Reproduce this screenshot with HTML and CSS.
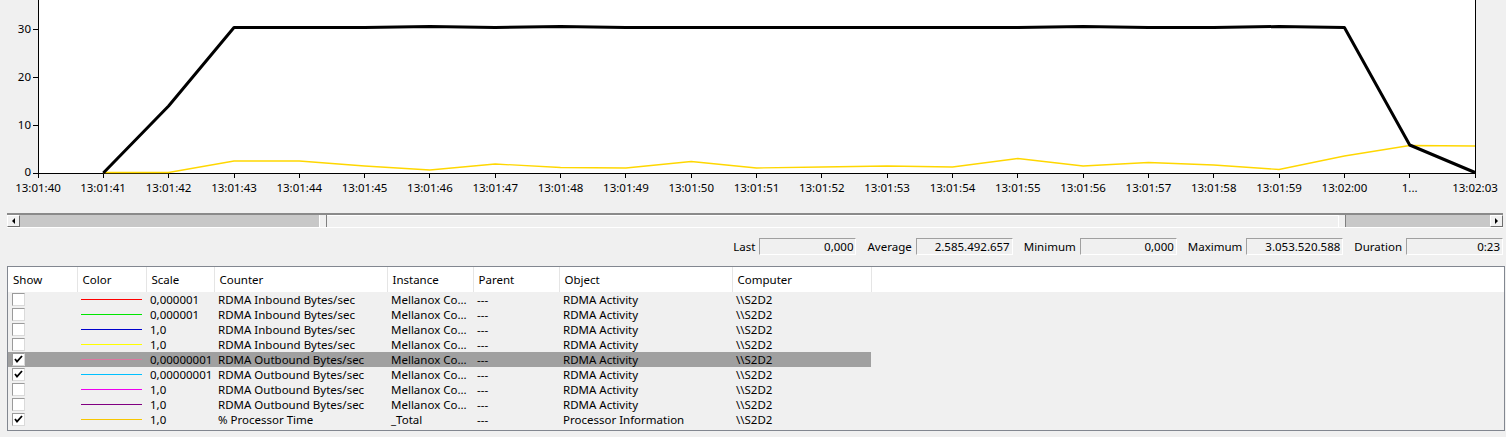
FILE: index.html
```html
<!DOCTYPE html>
<html lang="en">
<head>
    <meta charset="UTF-8">
    <meta name="viewport" content="width=device-width, initial-scale=1.0">
    <title>Performance Monitor - RDMA Activity</title>
    <link rel="stylesheet" href="styles.css">
</head>
<body>
    <!-- Line Graph -->
    <div class="graph">
        <svg width="1506" height="200" viewBox="0 0 1506 200">
            <rect x="38" y="0" width="1437" height="173" fill="#ffffff"/>

            <!-- Axes -->
            <path class="axis" d="M38.5 0 V173.5 H1475.5 V0"/>
            <path class="axis" d="M33 29.5 H38 M33 77.5 H38 M33 125.5 H38 M33 173.5 H38"/>
            <path class="axis" d="M38.5 173 v5 M103.5 173 v5 M168.5 173 v5 M234.5 173 v5 M299.5 173 v5 M364.5 173 v5 M429.5 173 v5 M495.5 173 v5 M560.5 173 v5 M625.5 173 v5 M691.5 173 v5 M756.5 173 v5 M821.5 173 v5 M887.5 173 v5 M952.5 173 v5 M1017.5 173 v5 M1083.5 173 v5 M1148.5 173 v5 M1213.5 173 v5 M1279.5 173 v5 M1344.5 173 v5 M1409.5 173 v5 M1475.5 173 v5"/>

            <!-- Y labels -->
            <text class="label" x="31" y="32.5" text-anchor="end">30</text>
            <text class="label" x="31" y="80.5" text-anchor="end">20</text>
            <text class="label" x="31" y="128.5" text-anchor="end">10</text>
            <text class="label" x="31" y="176" text-anchor="end">0</text>

            <!-- X labels -->
            <g class="label" text-anchor="middle">
                <text x="38" y="192">13:01:40</text>
                <text x="103" y="192">13:01:41</text>
                <text x="168.6" y="192">13:01:42</text>
                <text x="234" y="192">13:01:43</text>
                <text x="299.3" y="192">13:01:44</text>
                <text x="364.6" y="192">13:01:45</text>
                <text x="429.9" y="192">13:01:46</text>
                <text x="495.2" y="192">13:01:47</text>
                <text x="560.5" y="192">13:01:48</text>
                <text x="625.9" y="192">13:01:49</text>
                <text x="691.2" y="192">13:01:50</text>
                <text x="756.5" y="192">13:01:51</text>
                <text x="821.8" y="192">13:01:52</text>
                <text x="887.1" y="192">13:01:53</text>
                <text x="952.5" y="192">13:01:54</text>
                <text x="1017.8" y="192">13:01:55</text>
                <text x="1083.1" y="192">13:01:56</text>
                <text x="1148.4" y="192">13:01:57</text>
                <text x="1213.7" y="192">13:01:58</text>
                <text x="1279" y="192">13:01:59</text>
                <text x="1344.4" y="192">13:02:00</text>
                <text x="1409.7" y="192">1...</text>
                <text x="1475" y="192">13:02:03</text>
            </g>

            <!-- % Processor Time -->
            <polyline class="series-yellow" points="103.3,172.5 168.6,172.5 234,161 299.3,161 364.6,166 429.9,170 495.2,164 560.5,167.5 625.9,168 691.2,161.5 756.5,168 821.8,167 887.1,166 952.5,167 1017.8,158.5 1083.1,166 1148.4,162.5 1213.7,165 1279,169.5 1344.4,156 1409.7,145.5 1475,146"/>

            <!-- Selected counter (highlighted) -->
            <polyline class="series-black" points="103.3,173 168.6,106 234,27.5 299.3,27.5 364.6,27.5 429.9,26.5 495.2,27.5 560.5,26.5 625.9,27.5 691.2,27.5 756.5,27.5 821.8,27.5 887.1,27.5 952.5,27.5 1017.8,27.5 1083.1,26.5 1148.4,27.5 1213.7,27.5 1279,26.5 1344.4,27.5 1409.7,145 1475,172.5"/>
        </svg>
    </div>

    <!-- Time range slider -->
    <div class="scrollbar">
        <div class="sb-btn"><span class="arrow-left"></span></div>
        <div class="sb-track sb-track-left"></div>
        <div class="sb-grip"></div>
        <div class="sb-thumb"></div>
        <div class="sb-grip"></div>
        <div class="sb-track sb-track-right"></div>
        <div class="sb-btn"><span class="arrow-right"></span></div>
    </div>

    <!-- Statistics -->
    <div class="stats">
        <span class="stat-label">Last</span>
        <span class="stat-box">0,000</span>
        <span class="stat-label">Average</span>
        <span class="stat-box">2.585.492.657</span>
        <span class="stat-label">Minimum</span>
        <span class="stat-box">0,000</span>
        <span class="stat-label">Maximum</span>
        <span class="stat-box">3.053.520.588</span>
        <span class="stat-label">Duration</span>
        <span class="stat-box">0:23</span>
    </div>

    <!-- Counter legend -->
    <div class="counters">
        <table>
            <colgroup>
                <col class="c-show">
                <col class="c-color">
                <col class="c-scale">
                <col class="c-counter">
                <col class="c-instance">
                <col class="c-parent">
                <col class="c-object">
                <col class="c-computer">
                <col>
            </colgroup>
            <thead>
                <tr>
                    <th>Show</th>
                    <th>Color</th>
                    <th>Scale</th>
                    <th>Counter</th>
                    <th>Instance</th>
                    <th>Parent</th>
                    <th>Object</th>
                    <th>Computer</th>
                    <th class="fill"></th>
                </tr>
            </thead>
            <tbody>
                <tr>
                    <td class="show"><span class="check"></span></td>
                    <td class="color"><span class="swatch" style="background:#ff0000"></span></td>
                    <td>0,000001</td>
                    <td>RDMA Inbound Bytes/sec</td>
                    <td>Mellanox Co...</td>
                    <td>---</td>
                    <td>RDMA Activity</td>
                    <td>\\S2D2</td>
                    <td class="fill"></td>
                </tr>
                <tr>
                    <td class="show"><span class="check"></span></td>
                    <td class="color"><span class="swatch" style="background:#00e600"></span></td>
                    <td>0,000001</td>
                    <td>RDMA Inbound Bytes/sec</td>
                    <td>Mellanox Co...</td>
                    <td>---</td>
                    <td>RDMA Activity</td>
                    <td>\\S2D2</td>
                    <td class="fill"></td>
                </tr>
                <tr>
                    <td class="show"><span class="check"></span></td>
                    <td class="color"><span class="swatch" style="background:#0000cc"></span></td>
                    <td>1,0</td>
                    <td>RDMA Inbound Bytes/sec</td>
                    <td>Mellanox Co...</td>
                    <td>---</td>
                    <td>RDMA Activity</td>
                    <td>\\S2D2</td>
                    <td class="fill"></td>
                </tr>
                <tr>
                    <td class="show"><span class="check"></span></td>
                    <td class="color"><span class="swatch" style="background:#ffff00"></span></td>
                    <td>1,0</td>
                    <td>RDMA Inbound Bytes/sec</td>
                    <td>Mellanox Co...</td>
                    <td>---</td>
                    <td>RDMA Activity</td>
                    <td>\\S2D2</td>
                    <td class="fill"></td>
                </tr>
                <tr class="selected">
                    <td class="show"><span class="check"><svg width="11" height="11" viewBox="0 0 11 11"><path d="M2 5 L4 7.5 L9 2"/></svg></span></td>
                    <td class="color"><span class="swatch" style="background:#dc78a0"></span></td>
                    <td>0,00000001</td>
                    <td>RDMA Outbound Bytes/sec</td>
                    <td>Mellanox Co...</td>
                    <td>---</td>
                    <td>RDMA Activity</td>
                    <td>\\S2D2</td>
                    <td class="fill"></td>
                </tr>
                <tr>
                    <td class="show"><span class="check"><svg width="11" height="11" viewBox="0 0 11 11"><path d="M2 5 L4 7.5 L9 2"/></svg></span></td>
                    <td class="color"><span class="swatch" style="background:#00c0ff"></span></td>
                    <td>0,00000001</td>
                    <td>RDMA Outbound Bytes/sec</td>
                    <td>Mellanox Co...</td>
                    <td>---</td>
                    <td>RDMA Activity</td>
                    <td>\\S2D2</td>
                    <td class="fill"></td>
                </tr>
                <tr>
                    <td class="show"><span class="check"></span></td>
                    <td class="color"><span class="swatch" style="background:#ee00ee"></span></td>
                    <td>1,0</td>
                    <td>RDMA Outbound Bytes/sec</td>
                    <td>Mellanox Co...</td>
                    <td>---</td>
                    <td>RDMA Activity</td>
                    <td>\\S2D2</td>
                    <td class="fill"></td>
                </tr>
                <tr>
                    <td class="show"><span class="check"></span></td>
                    <td class="color"><span class="swatch" style="background:#800080"></span></td>
                    <td>1,0</td>
                    <td>RDMA Outbound Bytes/sec</td>
                    <td>Mellanox Co...</td>
                    <td>---</td>
                    <td>RDMA Activity</td>
                    <td>\\S2D2</td>
                    <td class="fill"></td>
                </tr>
                <tr>
                    <td class="show"><span class="check"><svg width="11" height="11" viewBox="0 0 11 11"><path d="M2 5 L4 7.5 L9 2"/></svg></span></td>
                    <td class="color"><span class="swatch" style="background:#f7c600"></span></td>
                    <td>1,0</td>
                    <td>% Processor Time</td>
                    <td>_Total</td>
                    <td>---</td>
                    <td>Processor Information</td>
                    <td>\\S2D2</td>
                    <td class="fill"></td>
                </tr>
            </tbody>
        </table>
    </div>
</body>
</html>
```

FILE: styles.css
```css
/* General */
body {
    margin: 0;
    background-color: #f0f0f0;
    font-family: "Noto Sans", "Open Sans", sans-serif;
    font-size: 11.5px;
    color: #000000;
}

/* Graph */
.graph svg {
    display: block;
}

.axis {
    fill: none;
    stroke: #000000;
    stroke-width: 1;
    shape-rendering: crispEdges;
}

.label {
    font-family: "Noto Sans", "Open Sans", sans-serif;
    font-size: 11.5px;
    fill: #000000;
}

.series-black {
    fill: none;
    stroke: #000000;
    stroke-width: 3;
    stroke-linejoin: round;
}

.series-yellow {
    fill: none;
    stroke: #ffd700;
    stroke-width: 1.3;
}

/* Time range slider */
.scrollbar {
    display: flex;
    height: 12px;
    margin: 13px 3px 0 7px;
    border-top: 2px solid #8a8a8a;
    border-bottom: 1px solid #ffffff;
}

.sb-btn {
    width: 13px;
    box-sizing: border-box;
    background: #f0f0f0;
    border: 1px solid;
    border-color: #ffffff #6e6e6e #6e6e6e #ffffff;
    display: flex;
    align-items: center;
    justify-content: center;
}

.arrow-left {
    width: 0;
    height: 0;
    border-top: 3px solid transparent;
    border-bottom: 3px solid transparent;
    border-right: 3px solid #000000;
}

.arrow-right {
    width: 0;
    height: 0;
    border-top: 3px solid transparent;
    border-bottom: 3px solid transparent;
    border-left: 3px solid #000000;
}

.sb-track {
    background: #c8c8c8;
}

.sb-track-left {
    width: 299px;
}

.sb-track-right {
    width: 144px;
}

.sb-grip {
    width: 8px;
    box-sizing: border-box;
    background: #f0f0f0;
    border-left: 1px solid #ffffff;
    border-right: 1px solid #808080;
}

.sb-thumb {
    flex: 1;
    background: #f0f0f0;
    border-top: 1px solid #ffffff;
}

/* Statistics */
.stats {
    display: flex;
    justify-content: flex-end;
    align-items: center;
    height: 17px;
    margin: 10px 3px 0 0;
}

.stat-label {
    margin-left: 11px;
}

.stat-box {
    width: 97px;
    height: 17px;
    box-sizing: border-box;
    margin-left: 4px;
    padding-right: 2px;
    border: 1px solid;
    border-color: #a0a0a0 #ffffff #ffffff #a0a0a0;
    text-align: right;
    line-height: 15px;
}

/* Counter legend */
.counters {
    height: 163px;
    margin: 11px 1px 0 7px;
    border: 1px solid #828790;
    background: #f0f0f0;
    overflow: hidden;
}

.counters table {
    width: 100%;
    border-collapse: collapse;
    table-layout: fixed;
}

.c-show { width: 69px; }
.c-color { width: 69px; }
.c-scale { width: 68px; }
.c-counter { width: 173px; }
.c-instance { width: 86px; }
.c-parent { width: 86px; }
.c-object { width: 173px; }
.c-computer { width: 139px; }

.counters th {
    height: 25px;
    padding: 0 0 0 5px;
    background: #ffffff;
    border-right: 1px solid #e5e5e5;
    font-weight: normal;
    text-align: left;
    white-space: nowrap;
}

.counters th.fill {
    border-right: none;
}

.counters td {
    height: 15px;
    padding: 0 0 0 4px;
    line-height: 15px;
    white-space: nowrap;
    overflow: hidden;
}

.counters tr.selected td {
    background: #a0a0a0;
}

.counters tr.selected td.fill {
    background: transparent;
}

.check {
    display: block;
    width: 13px;
    height: 13px;
    box-sizing: border-box;
    background: #ffffff;
    border: 1px solid;
    border-color: #9a9a9a #dadada #dadada #9a9a9a;
}

.check svg {
    display: block;
}

.check path {
    fill: none;
    stroke: #000000;
    stroke-width: 1.8;
}

.swatch {
    display: block;
    width: 61px;
    height: 1px;
}
```
